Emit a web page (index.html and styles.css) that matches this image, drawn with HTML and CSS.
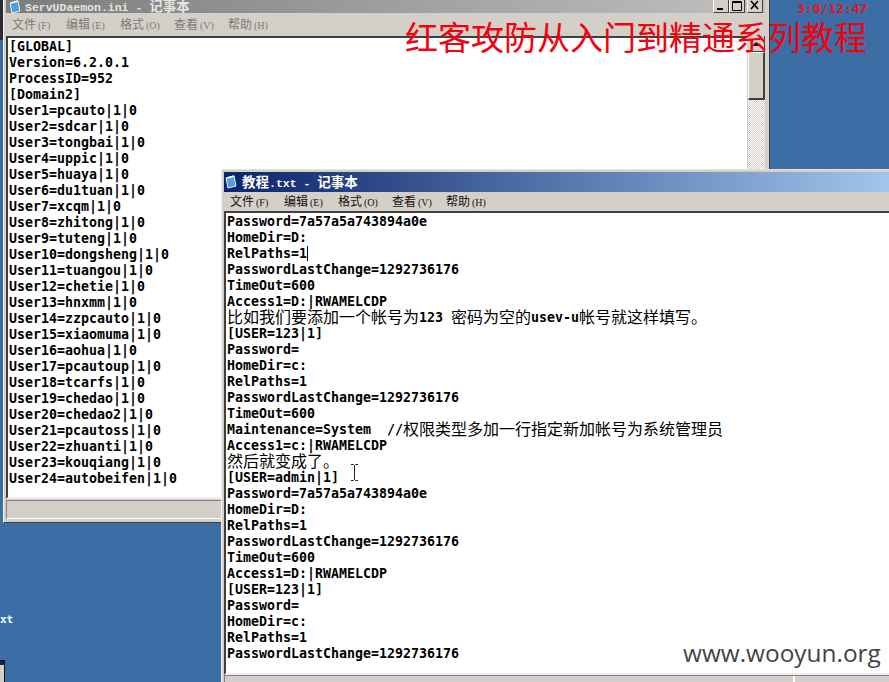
FILE: index.html
```html
<!DOCTYPE html>
<html lang="zh">
<head>
<meta charset="utf-8">
<title>教程.txt - 记事本</title>
<link rel="stylesheet" href="styles.css">
</head>
<body>
<div class="desktop">
  <div class="edge-strip"></div>
  <div class="clock">3:0/12:47</div>
  <div class="desk-label">xt</div>
  <div class="mini-win"><div class="mini-title"></div></div>

  <section class="win win-back">
    <header class="title title-inactive">
      <svg class="np-icon" viewBox="0 0 14 14"><path d="M2 3 L10 1 L12 11 L4 13 Z" fill="#4f9fe0" stroke="#e8f4ff" stroke-width="1"/><path d="M3 3 L10 1" stroke="#fff" stroke-width="1.5"/></svg>
      <span class="title-text"><span class="t-latin">ServUDaemon.ini - </span><span class="t-cjk">记事本</span></span>
      <div class="btns">
        <span class="btn"><svg viewBox="0 0 14 12"><rect x="3" y="8" width="6" height="2" fill="#000"/></svg></span>
        <span class="btn"><svg viewBox="0 0 14 12"><path d="M2.5 1.5H11.5V10.5H2.5Z M2.5 2.5H11.5" fill="none" stroke="#000"/></svg></span>
        <span class="btn btn-close"><svg viewBox="0 0 14 12"><path d="M3 1L10 9M10 1L3 9" stroke="#000" stroke-width="1.6" fill="none"/></svg></span>
      </div>
    </header>
    <nav class="menu menu-inactive"><span>文件<small>(F)</small></span><span>编辑<small>(E)</small></span><span>格式<small>(O)</small></span><span>查看<small>(V)</small></span><span>帮助<small>(H)</small></span></nav>
    <div class="edit-row">
      <div class="edit">
        <p>[GLOBAL]</p><p>Version=6.2.0.1</p><p>ProcessID=952</p><p>[Domain2]</p>
        <p>User1=pcauto|1|0</p><p>User2=sdcar|1|0</p><p>User3=tongbai|1|0</p><p>User4=uppic|1|0</p>
        <p>User5=huaya|1|0</p><p>User6=du1tuan|1|0</p><p>User7=xcqm|1|0</p><p>User8=zhitong|1|0</p>
        <p>User9=tuteng|1|0</p><p>User10=dongsheng|1|0</p><p>User11=tuangou|1|0</p><p>User12=chetie|1|0</p>
        <p>User13=hnxmm|1|0</p><p>User14=zzpcauto|1|0</p><p>User15=xiaomuma|1|0</p><p>User16=aohua|1|0</p>
        <p>User17=pcautoup|1|0</p><p>User18=tcarfs|1|0</p><p>User19=chedao|1|0</p><p>User20=chedao2|1|0</p>
        <p>User21=pcautoss|1|0</p><p>User22=zhuanti|1|0</p><p>User23=kouqiang|1|0</p><p>User24=autobeifen|1|0</p>
      </div>
      <div class="vscroll">
        <div class="sb-btn"><svg viewBox="0 0 16 16"><path d="M4 10L8 6L12 10Z" fill="#000"/></svg></div>
        <div class="sb-thumb"></div>
        <div class="sb-track"></div>
      </div>
    </div>
    <footer class="status"></footer>
  </section>

  <section class="win win-front">
    <header class="title title-active">
      <svg class="np-icon" viewBox="0 0 14 14"><path d="M2 3 L10 1 L12 11 L4 13 Z" fill="#4f9fe0" stroke="#e8f4ff" stroke-width="1"/><path d="M3 3 L10 1" stroke="#fff" stroke-width="1.5"/></svg>
      <span class="title-text"><span class="t-cjk">教程</span><span class="t-latin">.txt - </span><span class="t-cjk">记事本</span></span>
    </header>
    <nav class="menu"><span>文件<small>(F)</small></span><span>编辑<small>(E)</small></span><span>格式<small>(O)</small></span><span>查看<small>(V)</small></span><span>帮助<small>(H)</small></span></nav>
    <div class="edit-row">
      <div class="edit">
        <p>Password=7a57a5a743894a0e</p>
        <p>HomeDir=D:</p>
        <p>RelPaths=1<span class="caret"></span></p>
        <p>PasswordLastChange=1292736176</p>
        <p>TimeOut=600</p>
        <p>Access1=D:|RWAMELCDP</p>
        <p><span class="zh">比如我们要添加一个帐号为</span>123 <span class="zh">密码为空的</span>usev-u<span class="zh">帐号就这样填写。</span></p>
        <p>[USER=123|1]</p>
        <p>Password=</p>
        <p>HomeDir=c:</p>
        <p>RelPaths=1</p>
        <p>PasswordLastChange=1292736176</p>
        <p>TimeOut=600</p>
        <p>Maintenance=System  //<span class="zh">权限类型多加一行指定新加帐号为系统管理员</span></p>
        <p>Access1=c:|RWAMELCDP</p>
        <p><span class="zh">然后就变成了。</span></p>
        <p>[USER=admin|1]</p>
        <p>Password=7a57a5a743894a0e</p>
        <p>HomeDir=D:</p>
        <p>RelPaths=1</p>
        <p>PasswordLastChange=1292736176</p>
        <p>TimeOut=600</p>
        <p>Access1=D:|RWAMELCDP</p>
        <p>[USER=123|1]</p>
        <p>Password=</p>
        <p>HomeDir=c:</p>
        <p>RelPaths=1</p>
        <p>PasswordLastChange=1292736176</p>
      </div>
    </div>
    <footer class="status status-front"><span class="status-cell"></span><span class="status-cell status-end"></span></footer>
  </section>

  <svg class="ibeam" viewBox="0 0 9 17"><path d="M1 0.5H3.5L4.5 1.5L5.5 0.5H8M4.5 1.5V15.5M1 16.5H3.5L4.5 15.5L5.5 16.5H8" fill="none" stroke="#222"/></svg>
  <div class="banner">红客攻防从入门到精通系列教程</div>
  <div class="watermark">www.wooyun.org</div>
</div>
</body>
</html>
```
FILE: styles.css
```css
* { box-sizing: border-box; }
html, body { margin: 0; padding: 0; }
body { background: #3a6ea5; overflow: hidden; }
.desktop {
  position: relative;
  width: 889px;
  height: 682px;
  overflow: hidden;
  background: #3a6ea5;
}
.edge-strip {
  position: absolute;
  left: 0; top: 0;
  width: 3px; height: 40px;
  background: #2b2b33;
}
.clock {
  position: absolute;
  left: 797px; top: 1px;
  font: bold 13px/15px "DejaVu Sans Mono", monospace;
  color: #e8101c;
}
.desk-label {
  position: absolute;
  left: 0; top: 613px;
  font: bold 11px/14px "DejaVu Sans Mono", monospace;
  color: #fff;
}
.mini-win {
  position: absolute;
  left: 0; top: 660px;
  width: 5px; height: 22px;
  background: #d4d0c8;
  border-right: 1px solid #111;
  border-top: 1px solid #111;
}
.mini-title { height: 4px; background: #0a246a; }

.win {
  position: absolute;
  display: flex;
  flex-direction: column;
  background: #d4d0c8;
}
.win-back {
  left: 3px; top: 0;
  width: 767px; height: 523px;
  padding: 0 4px 3px 2px;
  border-left: 1px solid #f4f2ee;
  border-right: 1px solid #404040;
  border-bottom: 1px solid #404040;
}
.win-front {
  left: 221px; top: 169px;
  width: 690px; height: 513px;
  padding: 2px 0 0 2px;
  border-left: 1px solid #f4f2ee;
  border-top: 1px solid #e6e3dd;
}
.title {
  display: flex;
  align-items: center;
  flex: none;
  padding-left: 2px;
  color: #fff;
}
.title-inactive {
  height: 13px;
  margin-bottom: 1px;
  background: linear-gradient(90deg, #7c7c7c, #c0c0c0);
  color: #e4e4e4;
}
.title-active {
  height: 20px;
  background: linear-gradient(90deg, #0a246a, #a6caf0);
}
.np-icon { width: 14px; height: 14px; flex: none; margin-right: 3px; }
.title-active .np-icon { margin: 0 4px 0 -2px; }
.title-text { white-space: pre; font-weight: bold; line-height: 13px; }
.t-latin { font: bold 11.5px/13px "Liberation Mono", monospace; }
.t-cjk { font: bold 13.5px/13px "Noto Sans CJK SC", sans-serif; }
.btns { display: flex; margin-left: auto; margin-right: 2px; gap: 0; }
.btn {
  display: block;
  width: 16px; height: 13px;
  background: #d4d0c8;
  border-right: 1px solid #404040;
  border-bottom: 1px solid #404040;
  border-left: 1px solid #fff;
}
.btn svg { display: block; width: 14px; height: 12px; }
.btn-close { margin-left: 2px; }
.menu {
  display: flex;
  flex: none;
  height: 19px;
  align-items: center;
  padding-left: 6px;
  font: 12px/16px "Noto Sans CJK SC", sans-serif;
  color: #111;
}
.menu-inactive { height: 22px; color: #7a7a7a; }
.menu span { width: 54px; white-space: nowrap; }
.menu small { font: 10px/16px "Liberation Serif", serif; margin-left: 2px; }
.edit-row { flex: 1; display: flex; min-height: 0; }
.edit {
  flex: 1;
  min-width: 0;
  padding: 1px 0 0 1px;
  background: #fff;
  border-top: 2px solid #404040;
  border-left: 2px solid #404040;
  border-right: 1px solid #d4d0c8;
  border-bottom: 2px solid #eee;
  color: #000;
  overflow: hidden;
}
.edit p {
  margin: 0;
  height: 16px;
  font: bold 13.29px/16px "DejaVu Sans Mono", monospace;
  white-space: pre;
}
.zh { font: 16px/0 "Noto Sans CJK SC", sans-serif; vertical-align: -1px; }
.caret {
  display: inline-block;
  width: 1px; height: 15px;
  background: #000;
  vertical-align: top;
}
.vscroll { flex: none; width: 17px; display: flex; flex-direction: column; }
.sb-btn {
  height: 16px; flex: none;
  background: #d4d0c8;
  border-right: 1px solid #404040;
  border-bottom: 1px solid #404040;
}
.sb-btn svg { display: block; width: 16px; height: 16px; }
.sb-thumb {
  height: 48px; flex: none;
  background: #d4d0c8;
  border: 1px solid #fff;
  border-right: 2px solid #404040;
  border-bottom: 2px solid #404040;
}
.sb-track {
  flex: 1;
  background-color: #fff;
  background-image: conic-gradient(#d4d0c8 25%, #fff 0 50%, #d4d0c8 0 75%, #fff 0);
  background-size: 2px 2px;
}
.status {
  flex: none;
  height: 19px;
  margin-top: 1px;
  background: #d4d0c8;
  border: 1px solid;
  border-color: #808080 #fff #fff #808080;
}
.status-front {
  display: flex;
  height: 7px;
  margin: 0;
  padding: 0;
  border-bottom: 0;
}
.status-cell { flex: 0 0 570px; border-right: 2px solid #fff; }
.status-end { flex: 1; border: 0; }
.ibeam {
  position: absolute;
  left: 350px; top: 464px;
  width: 9px; height: 17px;
}
.banner {
  position: absolute;
  left: 405px; top: 16px;
  font: 400 33px/40px "Noto Sans CJK SC", sans-serif;
  color: #f5000e;
  white-space: nowrap;
}
.watermark {
  position: absolute;
  left: 683px; top: 638px;
  font: 24.4px/30px "Open Sans", sans-serif;
  color: #444;
  white-space: nowrap;
}
```
